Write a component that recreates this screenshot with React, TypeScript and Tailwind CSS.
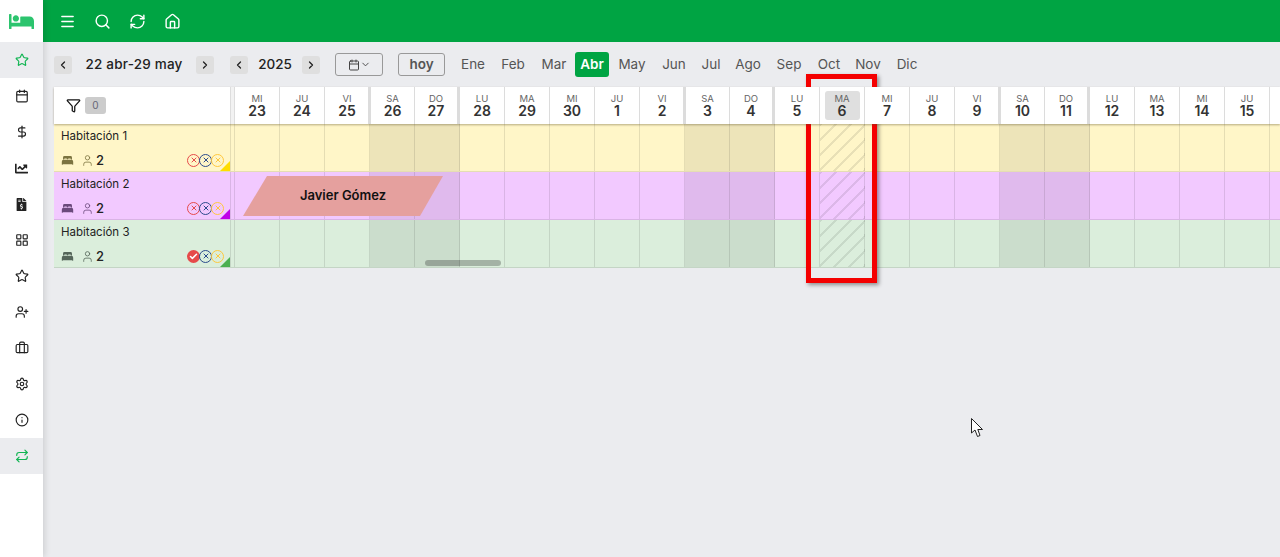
import {
  Briefcase,
  Calendar,
  Check,
  ChevronDown,
  ChevronLeft,
  ChevronRight,
  DollarSign,
  Funnel,
  House,
  Info,
  LayoutGrid,
  Menu,
  RefreshCw,
  Repeat,
  Search,
  Settings,
  Star,
  User,
  UserPlus,
  X,
} from 'lucide-react';
import { FaBed, FaChartLine, FaFileInvoiceDollar } from 'react-icons/fa';
import { IoBed } from 'react-icons/io5';

const days = [
  ['MI', '23'], ['JU', '24'], ['VI', '25'], ['SA', '26'], ['DO', '27'], ['LU', '28'],
  ['MA', '29'], ['MI', '30'], ['JU', '1'], ['VI', '2'], ['SA', '3'], ['DO', '4'],
  ['LU', '5'], ['MA', '6'], ['MI', '7'], ['JU', '8'], ['VI', '9'], ['SA', '10'],
  ['DO', '11'], ['LU', '12'], ['MA', '13'], ['MI', '14'], ['JU', '15'], ['VI', '16'],
];

const months = [
  ['Ene', 'w-[40px]'], ['Feb', 'w-[40px]'], ['Mar', 'w-[42px]'], ['Abr', 'w-[34px]'],
  ['May', 'w-[46px]'], ['Jun', 'w-[38px]'], ['Jul', 'w-[36px]'], ['Ago', 'w-[38px]'],
  ['Sep', 'w-[44px]'], ['Oct', 'w-[36px]'], ['Nov', 'w-[42px]'], ['Dic', 'w-[36px]'],
];

const rooms = [
  { name: 'Habitación 1', bg: 'bg-[#fff6c8]', icon: 'text-[#7c7440]', corner: 'border-b-[#ffdd00]', checked: false },
  { name: 'Habitación 2', bg: 'bg-[#f2c9ff]', icon: 'text-[#6b4a7c]', corner: 'border-b-[#c000e8]', checked: false },
  { name: 'Habitación 3', bg: 'bg-[#dbeedc]', icon: 'text-[#55665a]', corner: 'border-b-[#4caf50]', checked: true },
];

const sideItems = [
  { icon: <Star size={14} strokeWidth={2} />, active: true },
  { icon: <Calendar size={14} strokeWidth={2} /> },
  { icon: <DollarSign size={14} strokeWidth={2} /> },
  { icon: <FaChartLine size={13} /> },
  { icon: <FaFileInvoiceDollar size={13} /> },
  { icon: <LayoutGrid size={14} strokeWidth={2} /> },
  { icon: <Star size={14} strokeWidth={2} /> },
  { icon: <UserPlus size={14} strokeWidth={2} /> },
  { icon: <Briefcase size={14} strokeWidth={2} /> },
  { icon: <Settings size={14} strokeWidth={2} /> },
  { icon: <Info size={14} strokeWidth={2} /> },
  { icon: <Repeat size={14} strokeWidth={2} />, active: true },
];

const NavButton = ({ right }: { right?: boolean }) => (
  <button className="flex h-[18px] w-[18px] items-center justify-center rounded-[3px] bg-[#dfdfdf] text-[#222]">
    {right ? <ChevronRight size={12} strokeWidth={2.5} /> : <ChevronLeft size={12} strokeWidth={2.5} />}
  </button>
);

const Status = ({ color, checked }: { color: string; checked?: boolean }) =>
  checked ? (
    <span className="-mr-px flex h-[13px] w-[13px] items-center justify-center rounded-full bg-[#e64a4a] text-white">
      <Check size={9} strokeWidth={4} />
    </span>
  ) : (
    <span className={`-mr-px flex h-[13px] w-[13px] items-center justify-center rounded-full border ${color}`}>
      <X size={8} strokeWidth={3} />
    </span>
  );

export default function App() {
  return (
    <div className="relative flex h-[557px] w-[1280px] overflow-hidden bg-[#ebecef] font-['Inter',sans-serif] text-[#222]">
      <aside className="z-10 flex w-[43px] shrink-0 flex-col bg-white shadow-[2px_0_6px_rgba(0,0,0,0.12)]">
        <div className="flex h-[42px] items-center justify-center text-[#2cc46e]">
          <FaBed size={25} />
        </div>
        {sideItems.map((item, i) => (
          <div
            key={i}
            className={`flex h-9 items-center justify-center ${item.active ? 'bg-[#ebecef] text-[#12b553]' : 'text-[#222]'}`}
          >
            {item.icon}
          </div>
        ))}
      </aside>

      <main className="flex min-w-0 flex-1 flex-col">
        <header className="flex h-[42px] shrink-0 items-center gap-[18px] bg-[#00a443] pl-[16px] text-white">
          <Menu size={17} strokeWidth={2} />
          <Search size={17} strokeWidth={2} />
          <RefreshCw size={17} strokeWidth={2} />
          <House size={17} strokeWidth={2} />
        </header>

        <div className="flex h-[45px] shrink-0 items-center pl-[11px]">
          <NavButton />
          <span className="w-[124px] text-center text-[13.5px] font-medium tracking-[0.2px]">22 abr-29 may</span>
          <NavButton right />
          <div className="w-4" />
          <NavButton />
          <span className="w-[54px] text-center text-[13.5px] font-medium">2025</span>
          <NavButton right />
          <button className="ml-[15px] flex h-[23px] w-[48px] items-center justify-center rounded-[3px] border border-[#999] text-[#444]">
            <Calendar size={12} />
            <ChevronDown size={11} />
          </button>
          <button className="ml-[15px] h-[23px] w-[47px] rounded-[3px] border border-[#999] text-[13.5px] font-semibold text-[#555]">
            hoy
          </button>
          <div className="ml-[8px] flex items-center">
            {months.map(([m, w]) => (
              <span
                key={m}
                className={`${w} text-center text-[13.5px] ${
                  m === 'Abr'
                    ? 'flex h-[25px] items-center justify-center rounded-[3px] bg-[#00a443] font-semibold text-white'
                    : 'text-[#555]'
                }`}
              >
                {m}
              </span>
            ))}
          </div>
        </div>

        <div className="ml-[11px] flex flex-col">
          <div className="relative z-[1] flex h-[37px] bg-white shadow-[0_1px_2px_rgba(90,80,40,0.45)]">
            <div className="flex w-[176px] shrink-0 items-center pl-[12px]">
              <Funnel size={15} strokeWidth={2} className="text-[#111]" />
              <span className="ml-[4px] flex h-[17px] w-[21px] items-center justify-center rounded-[3px] bg-[#cccccc] text-[10px] text-[#667]">
                0
              </span>
            </div>
            <div className="w-[5px] shrink-0 border-x border-[#ddd] bg-[#f2f2f2]" />
            {days.map(([wd, n], i) => (
              <div
                key={i}
                className={`flex w-[45px] shrink-0 flex-col items-center justify-center border-r border-[#dcdcdc] ${
                  wd === 'SA' ? 'border-l-[3px] -ml-[2px] w-[47px]' : ''
                } ${wd === 'DO' ? 'border-r-[3px]' : ''}`}
              >
                <div className={`flex flex-col items-center leading-none ${n === '6' ? 'h-[29px] w-[35px] justify-center rounded-[3px] bg-[#dfdfdf]' : ''}`}>
                  <span className="text-[9.5px] leading-[10px] text-[#666]">{wd}</span>
                  <span className="text-[14px] leading-[14px] font-semibold text-[#333]">{n}</span>
                </div>
              </div>
            ))}
          </div>

          {rooms.map((room) => (
            <div key={room.name} className={`flex h-[48px] border-b border-black/10 ${room.bg}`}>
              <div className="relative flex w-[176px] shrink-0 flex-col justify-between pb-[3px] pl-[7px] pt-[5px]">
                <span className="text-[11.5px] leading-[14px]">{room.name}</span>
                <div className="flex items-center">
                  <IoBed size={13} className={room.icon} />
                  <User size={13} strokeWidth={1.5} className={`ml-[7px] ${room.icon}`} />
                  <span className="ml-[2px] text-[13px] leading-4 font-medium">2</span>
                  <div className="ml-auto mr-[7px] flex items-center">
                    <Status color="border-[#e64a4a] text-[#e64a4a]" checked={room.checked} />
                    <Status color="border-[#2b4a8c] text-[#2b4a8c]" />
                    <Status color="border-[#ffc83d] text-[#ffc83d]" />
                  </div>
                </div>
                <div className={`absolute bottom-0 right-0 h-0 w-0 border-b-[10px] border-l-[10px] border-l-transparent ${room.corner}`} />
              </div>
              <div className="w-[5px] shrink-0 border-x border-black/10" />
              {days.map(([wd, n], i) => (
                <div
                  key={i}
                  className={`w-[45px] shrink-0 border-r border-black/10 ${
                    wd === 'SA' || wd === 'DO' ? 'bg-black/[0.07]' : ''
                  } ${
                    n === '6'
                      ? 'bg-[repeating-linear-gradient(135deg,rgba(0,0,0,0.09)_0_1.5px,transparent_1.5px_10.6px)]'
                      : ''
                  }`}
                />
              ))}
            </div>
          ))}
        </div>
      </main>

      {/* reserva encima de la fila */}
      <div className="absolute left-[243px] top-[176px] flex h-10 w-[200px] items-center justify-center bg-[#e5a09e] text-[13px] font-semibold text-[#111] [clip-path:polygon(12%_0,100%_0,88.5%_100%,0_100%)]">
        Javier Gómez
      </div>

      {/* scroll */}
      <div className="absolute left-[425px] top-[260px] h-[6px] w-[76px] rounded-full bg-black/25" />

      {/* marco rojo */}
      <div className="absolute left-[806px] top-[74px] h-[209px] w-[71px] border-[5px] border-[#f40000] shadow-[2px_2px_4px_rgba(0,0,0,0.4)]" />

      {/* cursor */}
      <svg className="absolute left-[971px] top-[418px]" width="13" height="20" viewBox="0 0 13 20">
        <path d="M0.5 0.5 L0.5 15 L4 12 L6.5 18.5 L9 17.5 L6.8 11.5 L11.5 11.5 Z" fill="#fff" stroke="#222" strokeWidth="1" />
      </svg>
    </div>
  );
}
